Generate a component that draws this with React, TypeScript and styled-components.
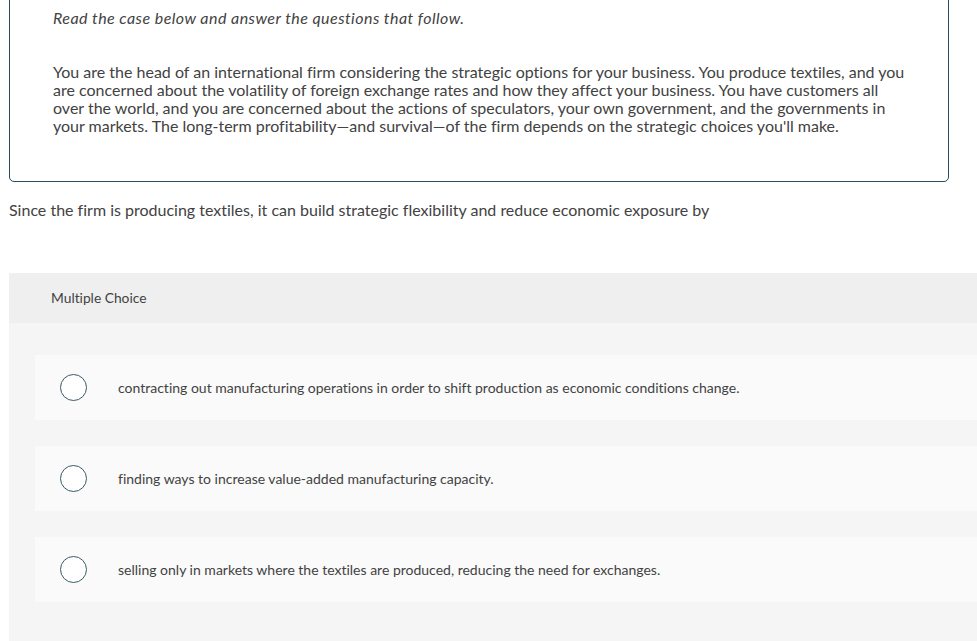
import React from "react";
import styled, { createGlobalStyle } from "styled-components";

const Global = createGlobalStyle`
  html, body { margin: 0; padding: 0; background: #ffffff; }
  body {
    font-family: "Lato", "Open Sans", sans-serif;
    color: #424242;
    overflow: hidden;
    font-variant-ligatures: none;
  }
`;

const Page = styled.div`
  padding-left: 9px;
  width: 968px;
`;

const CaseBox = styled.section`
  margin-top: -12px;
  width: 940px;
  box-sizing: border-box;
  border: 1px solid #2b4a5a;
  border-radius: 5px;
  padding: 20px 40px 46px 43px;
`;

const Intro = styled.p`
  margin: 0;
  font-style: italic;
  font-size: 16px;
  letter-spacing: 0.45px;
  line-height: 18px;
`;

const CaseText = styled.p`
  margin: 36px 0 0 0;
  font-size: 16px;
  line-height: 18px;
`;

const Question = styled.p`
  margin: 19px 0 0 0;
  font-size: 16px;
  line-height: 18px;
`;

const ChoiceSection = styled.section`
  margin-top: 54px;
  background: #f5f5f5;
  padding-bottom: 60px;
`;

const ChoiceHeader = styled.div`
  height: 50px;
  display: flex;
  align-items: center;
  padding-left: 42px;
  padding-bottom: 1px;
  box-sizing: border-box;
  background: #efefef;
  font-size: 13.8px;
`;

const OptionList = styled.div`
  display: flex;
  flex-direction: column;
  gap: 26px;
  padding: 32px 0 0 26px;
`;

const Option = styled.label`
  height: 65px;
  display: flex;
  align-items: center;
  background: #fafafa;
  padding-left: 25px;
  gap: 31px;
  font-size: 14px;
  cursor: pointer;
`;

const Radio = styled.span`
  width: 27px;
  height: 27px;
  box-sizing: border-box;
  border: 1.5px solid #3a5868;
  border-radius: 50%;
  background: #ffffff;
  flex: none;
`;

const options = [
  "contracting out manufacturing operations in order to shift production as economic conditions change.",
  "finding ways to increase value-added manufacturing capacity.",
  "selling only in markets where the textiles are produced, reducing the need for exchanges.",
];

export default function App() {
  return (
    <>
      <Global />
      <Page>
        <CaseBox>
          <Intro>Read the case below and answer the questions that follow.</Intro>
          <CaseText>
            You are the head of an international firm considering the strategic options for your business. You
            produce textiles, and you are concerned about the volatility of foreign exchange rates and how they
            affect your business. You have customers all over the world, and you are concerned about the actions of
            speculators, your own government, and the governments in your markets. The long-term profitability—and
            survival—of the firm depends on the strategic choices you'll make.
          </CaseText>
        </CaseBox>
        <Question>
          Since the firm is producing textiles, it can build strategic flexibility and reduce economic exposure by
        </Question>
        <ChoiceSection>
          <ChoiceHeader>Multiple Choice</ChoiceHeader>
          <OptionList>
            {options.map((o) => (
              <Option key={o}>
                <Radio />
                <span>{o}</span>
              </Option>
            ))}
          </OptionList>
        </ChoiceSection>
      </Page>
    </>
  );
}
